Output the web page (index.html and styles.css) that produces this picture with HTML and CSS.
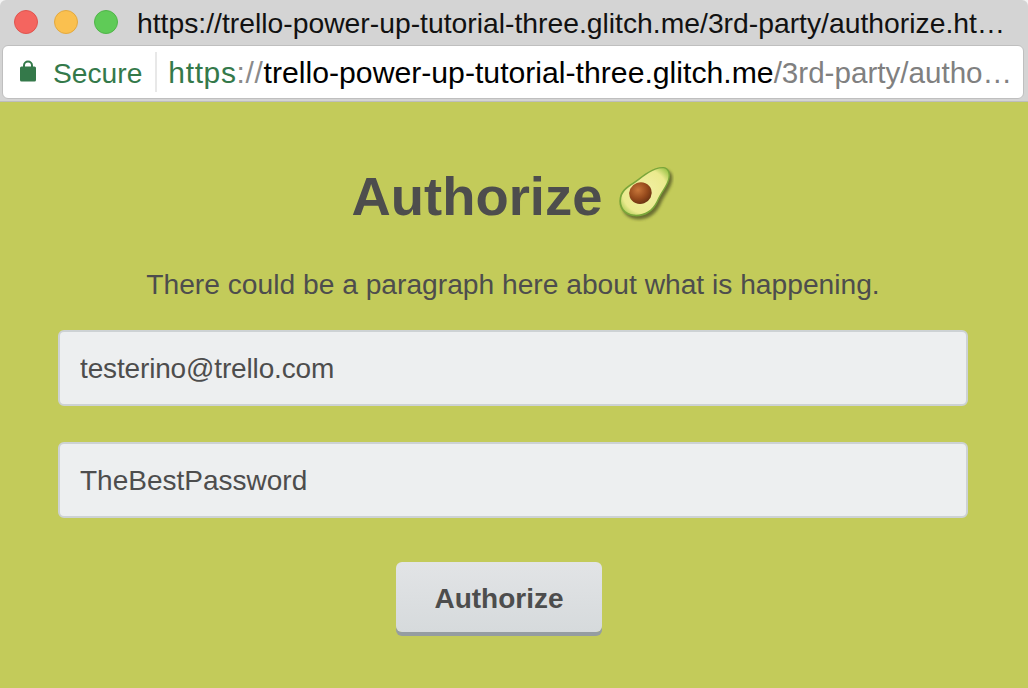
FILE: index.html
```html
<!DOCTYPE html>
<html lang="en">
<head>
    <meta charset="UTF-8">
    <meta name="viewport" content="width=device-width, initial-scale=1.0">
    <title>Authorize</title>
    <link rel="stylesheet" href="styles.css">
</head>
<body>
    <!-- Browser chrome -->
    <div class="titlebar">
        <span class="light red"></span>
        <span class="light yellow"></span>
        <span class="light green"></span>
        <div class="window-title">https://trello-power-up-tutorial-three.glitch.me/3rd-party/authorize.ht…</div>
    </div>
    <div class="toolbar">
        <div class="omnibox">
            <svg class="lock" width="16" height="22" viewBox="0 0 16 22">
                <path d="M4 9V5.5a4 4 0 0 1 8 0V9" fill="none" stroke="#34794a" stroke-width="2"/>
                <rect x="0" y="6.500" width="16" height="15" rx="1.500" fill="#34794a"/>
            </svg>
            <span class="secure">Secure</span>
            <span class="divider"></span>
            <span class="url"><span class="scheme">https</span><span class="slashes">://</span><span class="host">trello-power-up-tutorial-three.glitch.me</span><span class="path">/3rd-party/autho…</span></span>
        </div>
    </div>

    <!-- Page -->
    <div class="page">
        <h1>Authorize
            <svg class="avocado" width="57" height="57" viewBox="50 30 170 170">
                <defs>
                    <radialGradient id="flesh" cx="50%" cy="50%" r="64%">
                        <stop offset="0" stop-color="#f2f0a4"/>
                        <stop offset="0.74" stop-color="#ebea8e"/>
                        <stop offset="1" stop-color="#a5c850"/>
                    </radialGradient>
                    <radialGradient id="pit" cx="45%" cy="32%" r="75%">
                        <stop offset="0" stop-color="#c9773a"/>
                        <stop offset="0.55" stop-color="#964a1c"/>
                        <stop offset="1" stop-color="#5f2c10"/>
                    </radialGradient>
                    <filter id="soft">
                        <feGaussianBlur stdDeviation="4"/>
                    </filter>
                </defs>
                <path d="M190 36C206 38 212 56 206 74C199 98 184 112 172 140C158 170 130 186 100 183C70 180 52 156 58 127C63 102 84 92 104 78C130 58 160 34 190 36Z" fill="#5c5f2a" opacity="0.85" transform="translate(7 9)" filter="url(#soft)"/>
                <path d="M190 36C206 38 212 56 206 74C199 98 184 112 172 140C158 170 130 186 100 183C70 180 52 156 58 127C63 102 84 92 104 78C130 58 160 34 190 36Z" fill="#7ba63a"/>
                <path d="M189 40C202 42 207 57 202 73C195 96 180 110 168 138C155 166 129 180 101 178C74 176 58 154 63 128C68 105 88 95 108 81C133 62 162 38 189 40Z" fill="url(#flesh)"/>
                <ellipse cx="120" cy="114" rx="34" ry="32" transform="rotate(-20 120 114)" fill="url(#pit)"/>
            </svg>
        </h1>
        <p class="intro">There could be a paragraph here about what is happening.</p>
        <form class="auth-form">
            <input class="form-control email" type="text" value="testerino@trello.com">
            <input class="form-control" type="text" value="TheBestPassword">
            <button type="button" class="btn">Authorize</button>
        </form>
    </div>
</body>
</html>
```

FILE: styles.css
```css
* {
    box-sizing: border-box;
}
html, body {
    height: 100%;
}
body {
    margin: 0;
    font-family: "Liberation Sans", Arial, sans-serif;
    background-color: #f4f4f4;
    overflow: hidden;
    display: flex;
    flex-direction: column;
}
.titlebar {
    height: 44px;
    background-color: #d4d4d4;
    display: flex;
    align-items: center;
    padding-left: 14px;
    gap: 16px;
    border-radius: 6px 6px 0 0;
}
.light {
    width: 24px;
    height: 24px;
    border-radius: 50%;
    flex: none;
}
.red {
    background-color: #f4655f;
    border: 1px solid #e0544e;
}
.yellow {
    background-color: #fac04f;
    border: 1px solid #e3a93f;
}
.green {
    background-color: #5fcb57;
    border: 1px solid #50b549;
}
.window-title {
    margin-left: 3px;
    padding-top: 3px;
    font-size: 28.3px;
    color: #111;
    white-space: nowrap;
}
.toolbar {
    height: 58px;
    background-color: #d4d4d4;
    padding: 1px 4px 2px 2px;
    border-bottom: 1px solid #bdbdbd;
}
.omnibox {
    height: 54px;
    background: white;
    border: 1px solid #bfbfbf;
    border-radius: 6px;
    display: flex;
    align-items: center;
    padding: 2px 0 0 17px;
    font-size: 28.2px;
    white-space: nowrap;
}
.lock {
    flex: none;
    margin-top: -4px;
}
.secure {
    margin-left: 17px;
    color: #34794a;
}
.divider {
    width: 2px;
    height: 40px;
    background-color: #e8e8e8;
    margin: -2px 11px 0 13px;
}
.url {
    font-size: 30px;
}
.scheme {
    color: #34794a;
    letter-spacing: 0.65px;
}
.slashes {
    color: #8a8a8a;
    letter-spacing: 0.65px;
}
.host {
    color: #000;
    font-size: 30.2px;
}
.path {
    color: #808080;
    font-size: 29.6px;
}
.page {
    flex: 1;
    padding: 0 60px 0 58px;
    background-color: #c3cb5a;
    color: #4d4d4d;
    text-align: center;
}
h1 {
    margin: 63px 0 0 0;
    font-size: 54.4px;
    line-height: 64px;
    font-weight: bold;
    display: flex;
    justify-content: center;
    align-items: center;
    gap: 15px;
}
.avocado {
    flex: none;
    margin-top: -8px;
}
.intro {
    margin: 37px 0 0 0;
    font-size: 28.2px;
    line-height: 36px;
}
.auth-form {
    margin-top: 28px;
    display: flex;
    flex-direction: column;
    align-items: center;
}
.form-control {
    width: 100%;
    height: 76px;
    margin-bottom: 36px;
    padding: 2px 20px 0 20px;
    background-color: #edeff0;
    border: 2px solid #cdd2d4;
    border-radius: 6px;
    font-family: inherit;
    font-size: 28px;
    color: #4d4d4d;
}
.email {
    letter-spacing: -0.15px;
}
.btn {
    width: 206px;
    height: 70px;
    margin-top: 8px;
    margin-left: -28px;
    padding-top: 4px;
    background: linear-gradient(#e2e4e6, #d6dadc);
    border: none;
    border-radius: 6px;
    box-shadow: 0 4px 0 #959da1;
    font-family: inherit;
    font-size: 28px;
    font-weight: bold;
    color: #4d4d4d;
}
```
